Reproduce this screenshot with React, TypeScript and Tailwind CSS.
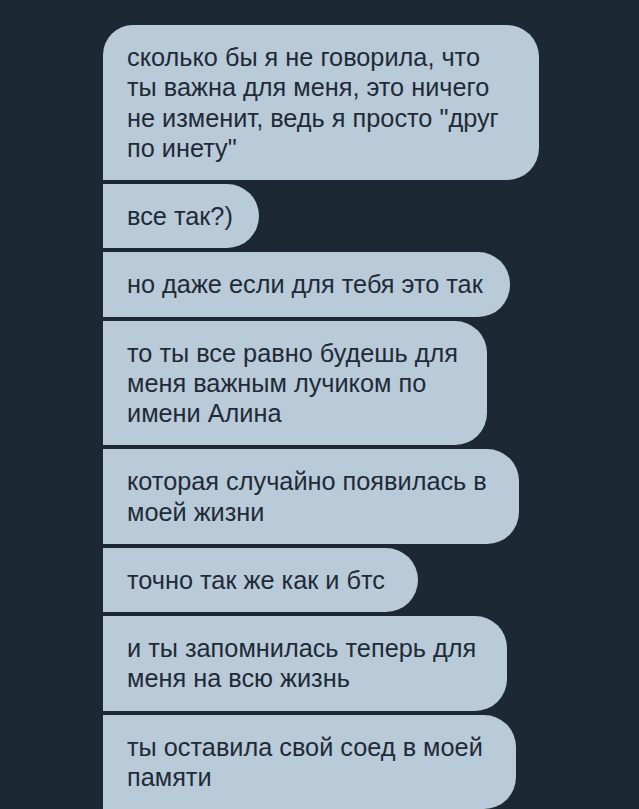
import React from "react";

const msgs: { lines: string[]; cls: string }[] = [
  {
    lines: [
      "сколько бы я не говорила, что",
      "ты важна для меня, это ничего",
      "не изменит, ведь я просто \"друг",
      "по инету\"",
    ],
    cls: "w-[436px] rounded-tl-[30px]",
  },
  { lines: ["все так?)"], cls: "w-[156px]" },
  { lines: ["но даже если для тебя это так"], cls: "w-[407px]" },
  { lines: ["то ты все равно будешь для", "меня важным лучиком по", "имени Алина"], cls: "w-[384px]" },
  { lines: ["которая случайно появилась в", "моей жизни"], cls: "w-[416px]" },
  { lines: ["точно так же как и бтс"], cls: "w-[315px]" },
  { lines: ["и ты запомнилась теперь для", "меня на всю жизнь"], cls: "w-[404px]" },
  { lines: ["ты оставила свой соед в моей", "памяти"], cls: "w-[413px]" },
];

export default function App() {
  return (
    <div className="w-[639px] h-[809px] overflow-hidden bg-[#1c2834] pt-[25px] pl-[103px] font-['Liberation_Sans',Arial,sans-serif]">
      <div className="flex flex-col gap-[4px]">
        {msgs.map((m, i) => (
          <div
            key={i}
            className={
              "bg-[#b9cad8] text-[#1f2b37] pl-[24px] pt-[17px] pb-[17px] text-[25.3px] leading-[30.25px] whitespace-nowrap rounded-r-[32px] " +
              m.cls
            }
          >
            {m.lines.map((l, j) => (
              <div key={j}>{l}</div>
            ))}
          </div>
        ))}
      </div>
    </div>
  );
}
